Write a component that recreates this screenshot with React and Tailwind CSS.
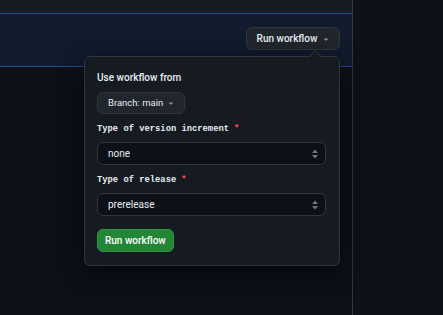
import React from "react";

const sans = "font-['Roboto','Noto_Sans','Liberation_Sans',sans-serif]";
const mono = "font-['Liberation_Mono','DejaVu_Sans_Mono',monospace]";

function Caret({ className = "", size = 10 }) {
  return (
    <svg width={size} height={size} viewBox="0 0 16 16" className={className} fill="currentColor">
      <path d="M4.427 7.427l3.396 3.396a.25.25 0 00.354 0l3.396-3.396A.25.25 0 0011.396 7H4.604a.25.25 0 00-.177.427z" />
    </svg>
  );
}

function UpDown() {
  return (
    <svg width="8" height="10" viewBox="0 0 8 10" fill="#6e7681">
      <path d="M4 0.5L7 4H1z" />
      <path d="M4 9.5L1 6h6z" />
    </svg>
  );
}

// Select — campo a tendina con label monospace e asterisco rosso.
function Select({ label, value }) {
  return (
    <div>
      <div className={`${mono} flex items-center gap-[5px] text-[8.8px] font-bold text-[#e6edf3] leading-[12px]`}>
        <span>{label}</span>
        <span className="text-[#f85149]">*</span>
      </div>
      <div className="mt-[7px] flex h-[23px] w-[229px] items-center justify-between rounded-[6px] border border-[#30363d] bg-[#0d1117] pl-[10px] pr-[6px]">
        <span className="text-[10px] text-[#e6edf3]">{value}</span>
        <UpDown />
      </div>
    </div>
  );
}

export default function App() {
  return (
    <div className={`${sans} flex h-[315px] w-[443px] overflow-hidden bg-[#0d1117]`}>
      <div className="w-[353px] shrink-0 border-r border-[#30363d]">
        <div className="h-[14px] border-b border-[#1f4b8e] bg-[#161b22]" />
        <div className="relative flex h-[53px] items-start justify-end border-b border-[#1f4b8e] bg-[#111b2d] pr-[12px] pt-[13px]">
          <button className="flex h-[23px] w-[94px] items-center justify-center gap-[4px] rounded-[6px] border border-[#30363d] bg-[#21262d] pl-[2px] text-[10px] font-medium text-[#e6edf3]">
            <span>Run workflow</span>
            <Caret className="text-[#8b949e]" />
          </button>

          <div className="absolute right-[12px] top-[42px] z-10 w-[256px] rounded-[6px] border border-[#30363d] bg-[#161b22] px-[12px] pb-[13px] pt-[14px] shadow-[0_8px_24px_rgba(1,4,9,0.75)]">
            <div className="absolute -top-[5px] right-[19px] h-[9px] w-[9px] rotate-45 border-l border-t border-[#30363d] bg-[#161b22]" />
            <div className="text-[10px] font-medium leading-[14px] text-[#e6edf3]">Use workflow from</div>
            <button className="mt-[7px] flex h-[22px] items-center gap-[3px] rounded-[6px] border border-[#30363d] bg-[#21262d] pl-[10px] pr-[8px] text-[9.5px] text-[#e6edf3]">
              <span>Branch: main</span>
              <Caret className="text-[#8b949e]" />
            </button>
            <div className="mt-[9px] flex flex-col gap-[9px]">
              <Select label="Type of version increment" value="none" />
              <Select label="Type of release" value="prerelease" />
            </div>
            <button className="mt-[13px] flex h-[23px] items-center rounded-[6px] border border-[#2e9a40] bg-[#238636] px-[7px] text-[10px] font-medium text-white">
              Run workflow
            </button>
          </div>
        </div>
      </div>
      <div className="flex-1 bg-[#0e1117]" />
    </div>
  );
}
